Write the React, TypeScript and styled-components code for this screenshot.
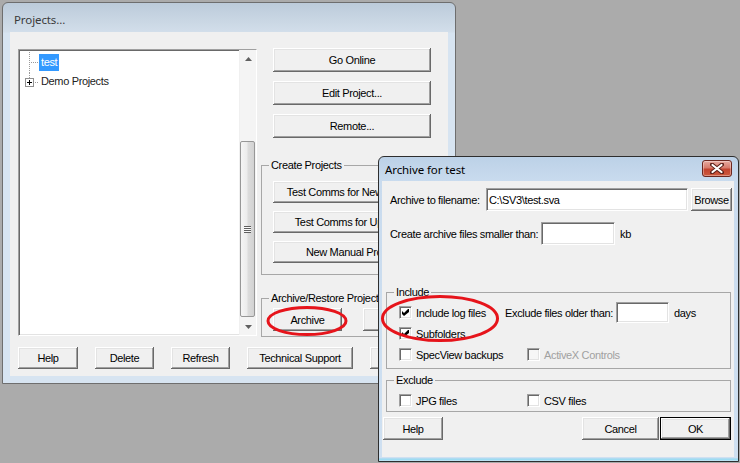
import React from 'react';
import styled, { createGlobalStyle, css } from 'styled-components';

const GlobalStyle = createGlobalStyle`
  * { box-sizing: border-box; }
  html, body {
    margin: 0;
    padding: 0;
    background: #ababab;
  }
  body {
    font-family: "Liberation Sans", Arial, sans-serif;
    font-size: 11px;
    letter-spacing: -0.35px;
    color: #000;
  }
`;

const sunken = css`
  border: 1px solid;
  border-color: #a0a0a0 #fff #fff #a0a0a0;
  box-shadow: inset 1px 1px #696969, inset -1px -1px #e3e3e3;
`;

const Desktop = styled.div`
  position: relative;
  width: 740px;
  height: 463px;
  background: #ababab;
  overflow: hidden;
`;

const Window = styled.div<{ $x: number; $y: number; $w: number; $h: number; $active?: boolean; $frame: string }>`
  position: absolute;
  left: ${p => p.$x}px;
  top: ${p => p.$y}px;
  width: ${p => p.$w}px;
  height: ${p => p.$h}px;
  display: flex;
  flex-direction: column;
  padding: ${p => p.$frame};
  border: 1px solid ${p => (p.$active ? '#2e2e2e' : '#6e6e6e')};
  border-radius: 6px 6px 0 0;
  background: ${p =>
    p.$active
      ? 'linear-gradient(180deg, #bcd1e7 0px, #c9dbee 24px, #cfe0f1 calc(100% - 3px), #8fd7f1 calc(100% - 2px), #c9e6f4 100%)'
      : 'linear-gradient(180deg, #bccbda 0px, #d2deea 29px, #d7e4f1 30px, #d7e4f1 100%)'};
`;

const TitleBar = styled.div<{ $h: number; $pt: number; $pl: number; $active?: boolean }>`
  height: ${p => p.$h}px;
  flex: none;
  display: flex;
  justify-content: space-between;
  align-items: flex-start;
  padding: ${p => p.$pt}px 2px 0 ${p => p.$pl}px;
  font-family: "Noto Sans", "Liberation Sans", sans-serif;
  font-size: 11.5px;
  line-height: 14px;
  letter-spacing: -0.1px;
  color: ${p => (p.$active ? '#000' : '#3a3a3a')};
`;

const CloseButton = styled.div`
  width: 30px;
  height: 17px;
  margin-top: -3px;
  border: 1px solid #6b2720;
  border-radius: 3px;
  background: linear-gradient(180deg, #e7aaa0 0%, #d77b6c 45%, #c2432f 55%, #cd5a3e 100%);
  box-shadow: inset 0 0 0 1px rgba(255, 255, 255, 0.35);
  display: flex;
  align-items: center;
  justify-content: center;
`;

const Client = styled.div<{ $pad: string }>`
  flex: 1;
  display: flex;
  flex-direction: column;
  background: #f0f0f0;
  padding: ${p => p.$pad};
`;

const Button = styled.button<{ $w: number; $h: number; $default?: boolean }>`
  flex: none;
  width: ${p => p.$w}px;
  height: ${p => p.$h}px;
  padding: 0;
  margin: 0;
  font: inherit;
  letter-spacing: inherit;
  color: #000;
  background: #f0f0f0;
  border: ${p => (p.$default ? '1px solid #000' : 'none')};
  box-shadow: inset -1px -1px #696969, inset 1px 1px #fff, inset -2px -2px #a0a0a0, inset 2px 2px #e3e3e3;
  display: flex;
  align-items: center;
  justify-content: center;
  white-space: nowrap;
  overflow: hidden;
`;

const MainRow = styled.div`
  display: flex;
  gap: 4px;
  height: 289px;
  flex: none;
`;

const Tree = styled.div`
  margin-top: 1px;
  width: 239px;
  height: 287px;
  display: flex;
  background: #fff;
  ${sunken};
`;

const TreeList = styled.div`
  flex: 1;
  padding-top: 4px;
  color: #222;
`;

const TreeRow = styled.div`
  height: 19px;
  display: flex;
  align-items: flex-start;
`;

const TreeLabel = styled.span<{ $selected?: boolean }>`
  height: 17px;
  line-height: 17px;
  padding: 0 2px;
  background: ${p => (p.$selected ? '#3399ff' : 'transparent')};
  color: ${p => (p.$selected ? '#fff' : '#222')};
`;

const ScrollBar = styled.div`
  width: 17px;
  display: flex;
  flex-direction: column;
  background: #f4f4f4;
  border-left: 1px solid #f0f0f0;
`;

const ScrollArrow = styled.div`
  height: 17px;
  flex: none;
  display: flex;
  align-items: center;
  justify-content: center;
`;

const ScrollTrack = styled.div`
  flex: 1;
  display: flex;
  flex-direction: column;
`;

const Thumb = styled.div`
  margin: 74px 1px 0 0;
  height: 176px;
  border: 1px solid #979797;
  border-radius: 2px;
  background: linear-gradient(90deg, #f5f5f5 0%, #ececec 45%, #dcdcdc 55%, #d2d2d2 100%);
  display: flex;
  align-items: center;
  justify-content: center;
`;

const Grip = styled.div`
  width: 7px;
  height: 7px;
  background: repeating-linear-gradient(180deg, #5f5f5f 0 1px, #fafafa 1px 2px);
`;

const Side = styled.div`
  width: 182px;
  display: flex;
  flex-direction: column;
`;

const ButtonStack = styled.div<{ $gap: number; $pl: number }>`
  display: flex;
  flex-direction: column;
  gap: ${p => p.$gap}px;
  padding-left: ${p => p.$pl}px;
`;

const Group = styled.fieldset<{ $mt: number; $pad: string; $ml?: number; $w?: number }>`
  margin: ${p => p.$mt}px 0 0 ${p => p.$ml ?? 0}px;
  padding: ${p => p.$pad};
  width: ${p => (p.$w ? `${p.$w}px` : 'auto')};
  min-width: 0;
  border: 1px solid #a7a7a7;
`;

const Legend = styled.legend`
  margin-left: 7px;
  padding: 0 2px;
  line-height: 12px;
  white-space: nowrap;
`;

const ButtonRow = styled.div<{ $gap: number; $mt: number; $pl?: number }>`
  display: flex;
  gap: ${p => p.$gap}px;
  margin-top: ${p => p.$mt}px;
  padding-left: ${p => p.$pl ?? 0}px;
`;

const FieldRow = styled.div<{ $mt: number }>`
  display: flex;
  align-items: center;
  height: 23px;
  margin-top: ${p => p.$mt}px;
  padding-left: 7px;
`;

const Label = styled.span<{ $w?: number; $ml?: number; $disabled?: boolean }>`
  flex: none;
  width: ${p => (p.$w ? `${p.$w}px` : 'auto')};
  margin-left: ${p => p.$ml ?? 0}px;
  white-space: nowrap;
  color: ${p => (p.$disabled ? '#a0a0a0' : '#000')};
`;

const TextBox = styled.input<{ $w: number; $h: number }>`
  flex: none;
  width: ${p => p.$w}px;
  height: ${p => p.$h}px;
  margin: 0;
  padding: 0 2px;
  font: inherit;
  letter-spacing: inherit;
  color: #000;
  background: #fff;
  outline: none;
  ${sunken};
`;

const OptionRow = styled.div`
  height: 21px;
  display: flex;
  align-items: center;
  padding-left: 12px;
`;

const CheckItem = styled.label<{ $w?: number }>`
  flex: none;
  width: ${p => (p.$w ? `${p.$w}px` : 'auto')};
  display: flex;
  align-items: center;
  gap: 4px;
  white-space: nowrap;
`;

const CheckBox = styled.span<{ $disabled?: boolean }>`
  flex: none;
  width: 13px;
  height: 13px;
  display: flex;
  align-items: center;
  justify-content: center;
  background: ${p => (p.$disabled ? '#f6f6f6' : '#fff')};
  ${sunken};
`;

const Annotations = styled.svg`
  position: absolute;
  left: 0;
  top: 0;
  pointer-events: none;
`;

const CheckMark = () => (
  <svg width="7" height="7" viewBox="0 0 7 7">
    <path d="M0 2 L2 4 L6 0 L7 0 L7 3 L2 7 L0 5 Z" fill="#000" />
  </svg>
);

const Check = ({ label, checked, disabled, w }: { label: string; checked?: boolean; disabled?: boolean; w?: number }) => (
  <CheckItem $w={w}>
    <CheckBox $disabled={disabled}>{checked && <CheckMark />}</CheckBox>
    <Label $disabled={disabled}>{label}</Label>
  </CheckItem>
);

const Arrow = ({ down }: { down?: boolean }) => (
  <svg width="7" height="4" viewBox="0 0 7 4">
    <path d={down ? 'M0 0 H7 L3.5 4 Z' : 'M0 4 H7 L3.5 0 Z'} fill="#606060" />
  </svg>
);

const dotted = { stroke: '#9a9a9a', strokeDasharray: '1 1', strokeWidth: 1 };

export default function App() {
  return (
    <Desktop>
      <GlobalStyle />

      <Window $x={2} $y={2} $w={454} $h={382} $frame="0 7px 7px 7px">
        <TitleBar $h={29} $pt={10} $pl={4}>
          <span>Projects...</span>
        </TitleBar>
        <Client $pad="16px 5px 7px 8px">
          <MainRow>
            <Tree>
              <TreeList>
                <TreeRow>
                  <svg width="20" height="19" style={{ overflow: 'visible' }}>
                    <line x1="10.5" y1="-2" x2="10.5" y2="19" {...dotted} />
                    <line x1="12" y1="8.5" x2="20" y2="8.5" {...dotted} />
                  </svg>
                  <TreeLabel $selected>test</TreeLabel>
                </TreeRow>
                <TreeRow>
                  <svg width="20" height="19">
                    <line x1="10.5" y1="0" x2="10.5" y2="5" {...dotted} />
                    <rect x="6.5" y="5.5" width="8" height="8" fill="#fff" stroke="#8f8f8f" />
                    <rect x="8" y="9" width="5" height="1" fill="#000" />
                    <rect x="10" y="7" width="1" height="5" fill="#000" />
                    <line x1="16" y1="9.5" x2="20" y2="9.5" {...dotted} />
                  </svg>
                  <TreeLabel>Demo Projects</TreeLabel>
                </TreeRow>
              </TreeList>
              <ScrollBar>
                <ScrollArrow>
                  <Arrow />
                </ScrollArrow>
                <ScrollTrack>
                  <Thumb>
                    <Grip />
                  </Thumb>
                </ScrollTrack>
                <ScrollArrow>
                  <Arrow down />
                </ScrollArrow>
              </ScrollBar>
            </Tree>

            <Side>
              <ButtonStack $gap={9} $pl={12}>
                <Button $w={158} $h={24}>Go Online</Button>
                <Button $w={158} $h={24}>Edit Project...</Button>
                <Button $w={158} $h={24}>Remote...</Button>
              </ButtonStack>

              <Group $mt={21} $pad="10px 0 11px 0">
                <Legend>Create Projects</Legend>
                <ButtonStack $gap={8} $pl={11}>
                  <Button $w={158} $h={22}>Test Comms for New Project</Button>
                  <Button $w={158} $h={22}>Test Comms for Upgrade</Button>
                  <Button $w={158} $h={22}>New Manual Project</Button>
                </ButtonStack>
              </Group>

              <Group $mt={17} $pad="4px 0 5px 0">
                <Legend>Archive/Restore Projects</Legend>
                <ButtonRow $gap={21} $mt={0} $pl={11}>
                  <Button $w={69} $h={23}>Archive</Button>
                  <Button $w={69} $h={23}>Restore</Button>
                </ButtonRow>
              </Group>
            </Side>
          </MainRow>

          <ButtonRow $gap={17} $mt={10}>
            <Button $w={60} $h={22}>Help</Button>
            <Button $w={59} $h={22}>Delete</Button>
            <Button $w={59} $h={22}>Refresh</Button>
            <Button $w={106} $h={22}>Technical Support</Button>
            <Button $w={60} $h={22}>Close</Button>
          </ButtonRow>
        </Client>
      </Window>

      <Window $x={378} $y={156} $w={361} $h={306} $frame="0 4px 4px 3px" $active>
        <TitleBar $h={24} $pt={6} $pl={3} $active>
          <span>Archive for test</span>
          <CloseButton>
            <svg width="14" height="11" viewBox="0 0 14 11">
              <path d="M2 1.5 L12 9.5 M12 1.5 L2 9.5" stroke="#5b2019" strokeWidth="4" strokeLinecap="round" />
              <path d="M2.5 2 L11.5 9 M11.5 2 L2.5 9" stroke="#fff" strokeWidth="2.2" strokeLinecap="round" />
            </svg>
          </CloseButton>
        </TitleBar>
        <Client $pad="0 2px 0 1px">
          <FieldRow $mt={7}>
            <Label $w={96}>Archive to filename:</Label>
            <TextBox $w={202} $h={23} defaultValue="C:\SV3\test.sva" readOnly />
            <Button $w={41} $h={23} style={{ marginLeft: 3 }}>Browse</Button>
          </FieldRow>
          <FieldRow $mt={11}>
            <Label $w={151}>Create archive files smaller than:</Label>
            <TextBox $w={74} $h={23} readOnly />
            <Label $ml={5}>kb</Label>
          </FieldRow>

          <Group $mt={41} $ml={3} $w={345} $pad="4px 0 3px 0">
            <Legend>Include</Legend>
            <OptionRow>
              <Check label="Include log files" checked w={106} />
              <Label>Exclude files older than:</Label>
              <TextBox $w={53} $h={21} readOnly style={{ marginLeft: 3 }} />
              <Label $ml={5}>days</Label>
            </OptionRow>
            <OptionRow>
              <Check label="Subfolders" checked />
            </OptionRow>
            <OptionRow>
              <Check label="SpecView backups" w={128} />
              <Check label="ActiveX Controls" disabled />
            </OptionRow>
          </Group>

          <Group $mt={5} $ml={3} $w={345} $pad="4px 0 0 0">
            <Legend>Exclude</Legend>
            <OptionRow>
              <Check label="JPG files" w={128} />
              <Check label="CSV files" />
            </OptionRow>
          </Group>

          <ButtonRow $gap={0} $mt={5}>
            <Button $w={60} $h={23}>Help</Button>
            <Button $w={77} $h={23} style={{ marginLeft: 139 }}>Cancel</Button>
            <Button $w={71} $h={23} $default style={{ marginLeft: 1 }}>OK</Button>
          </ButtonRow>
        </Client>
      </Window>

      <Annotations width="740" height="463">
        <ellipse cx="307" cy="321" rx="39" ry="13.5" fill="none" stroke="#e6141b" strokeWidth="3" />
        <ellipse cx="440" cy="318.5" rx="57.5" ry="22" fill="none" stroke="#e6141b" strokeWidth="3" />
      </Annotations>
    </Desktop>
  );
}
